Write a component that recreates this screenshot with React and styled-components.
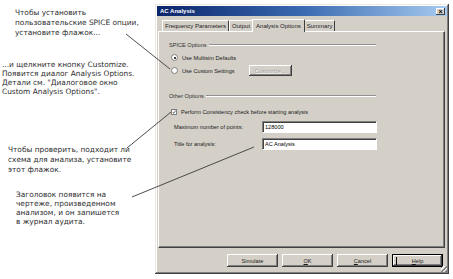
import styled, { createGlobalStyle } from "styled-components";

const GlobalStyle = createGlobalStyle`
  html, body {
    margin: 0;
    padding: 0;
    background: #ffffff;
  }
`;

const Page = styled.div`
  position: relative;
  display: flex;
  width: 453px;
  height: 279px;
  overflow: hidden;
  background: #ffffff;
`;

// left column with the russian callouts
const Notes = styled.div`
  width: 155px;
  flex-shrink: 0;
  display: flex;
  flex-direction: column;
`;

const Note = styled.p`
  margin: ${(p) => p.$top}px 0 0 ${(p) => p.$left}px;
  font-family: "DejaVu Sans", Verdana, sans-serif;
  font-size: 7.4px;
  line-height: ${(p) => p.$lh || 9}px;
  color: #2e2e2e;
  white-space: nowrap;
`;

const Lines = styled.svg`
  position: absolute;
  left: 0;
  top: 0;
  pointer-events: none;
`;

// the dialog window
const Dialog = styled.div`
  margin-top: 4px;
  width: 294px;
  height: 270px;
  box-sizing: border-box;
  padding: 2px;
  background: #d4d0c8;
  box-shadow: inset -1px -1px 0 #404040, inset 1px 1px 0 #ece9e2,
    inset -2px -2px 0 #808080, inset 2px 2px 0 #ffffff;
  display: flex;
  flex-direction: column;
  font-family: "Liberation Sans", Arial, sans-serif;
  font-size: 5.6px;
  color: #1a1a1a;
  position: relative;
`;

const TitleBar = styled.div`
  height: 10px;
  display: flex;
  align-items: center;
  justify-content: space-between;
  padding: 0 2px 0 3px;
  background: linear-gradient(to right, #0a246a, #3a6ab0 50%, #a6caf0);
`;

const Title = styled.span`
  color: #ffffff;
  font-weight: bold;
  font-size: 6px;
`;

const CloseBox = styled.div`
  width: 9px;
  height: 7px;
  background: #d4d0c8;
  box-shadow: inset -1px -1px 0 #404040, inset 1px 1px 0 #ffffff;
  display: flex;
  align-items: center;
  justify-content: center;
  font-size: 7px;
  line-height: 1;
  color: #000;
  font-weight: bold;
`;

const TabStrip = styled.div`
  display: flex;
  align-items: flex-end;
  height: 13px;
  margin: 2px 0 0 5px;
`;

const Tab = styled.div`
  height: ${(p) => (p.$active ? 13 : 11)}px;
  box-sizing: border-box;
  padding: 0 ${(p) => (p.$active ? 3 : 2)}px;
  display: flex;
  align-items: center;
  font-size: 6px;
  background: #d4d0c8;
  border-top: 1px solid #ffffff;
  border-left: 1px solid #ffffff;
  border-right: 1px solid #404040;
  margin-left: ${(p) => (p.$active ? -1 : 0)}px;
  margin-right: ${(p) => (p.$active ? -1 : 0)}px;
  margin-bottom: ${(p) => (p.$active ? -1 : 0)}px;
  position: relative;
  z-index: ${(p) => (p.$active ? 2 : 1)};
  white-space: nowrap;
`;

const Panel = styled.div`
  height: 217px;
  margin: 0 2px 0 1px;
  box-sizing: border-box;
  border-top: 1px solid #ffffff;
  border-left: 1px solid #ffffff;
  border-right: 1px solid #404040;
  border-bottom: 1px solid #404040;
  box-shadow: inset -1px -1px 0 #808080;
  padding: 9px 0 0 10px;
  display: flex;
  flex-direction: column;
`;

const GroupHead = styled.div`
  display: flex;
  align-items: center;
  width: 207px;
  height: 8px;
  margin-top: ${(p) => p.$top || 0}px;
  gap: 2px;
  color: #303030;

  &::after {
    content: "";
    flex: 1;
    height: 0;
    border-top: 1px solid #909090;
    border-bottom: 1px solid #ffffff;
  }
`;

const OptionRow = styled.div`
  display: flex;
  align-items: center;
  height: 13px;
  margin-top: ${(p) => p.$top || 0}px;
  padding-left: ${(p) => p.$indent || 2}px;
  gap: 4px;
  white-space: nowrap;
`;

const Radio = styled.span`
  width: 5px;
  height: 5px;
  border-radius: 50%;
  background: #ffffff;
  border: 1px solid #808080;
  display: inline-flex;
  align-items: center;
  justify-content: center;

  &::after {
    content: "";
    width: 2px;
    height: 2px;
    border-radius: 50%;
    background: ${(p) => (p.$on ? "#000" : "transparent")};
  }
`;

const Check = styled.span`
  width: 6px;
  height: 6px;
  box-sizing: border-box;
  background: #ffffff;
  border: 1px solid #808080;
  display: inline-flex;
  align-items: center;
  justify-content: center;
  font-size: 6px;
  line-height: 1;
`;

const SmallButton = styled.div`
  margin-left: ${(p) => p.$left || 0}px;
  width: 43px;
  height: 11px;
  display: flex;
  align-items: center;
  justify-content: center;
  box-shadow: inset -1px -1px 0 #404040, inset 1px 1px 0 #ffffff,
    inset -2px -2px 0 #808080;
  color: #a0a0a0;
  text-shadow: 1px 1px 0 #ffffff;
`;

const FieldRow = styled.div`
  display: flex;
  align-items: center;
  height: ${(p) => p.$h || 13}px;
  margin-top: ${(p) => p.$top || 0}px;
  padding-left: 5px;
`;

const FieldLabel = styled.span`
  width: 88px;
`;

const Input = styled.div`
  width: 115px;
  height: 12px;
  box-sizing: border-box;
  background: #ffffff;
  border-top: 1px solid #808080;
  border-left: 1px solid #808080;
  border-right: 1px solid #ffffff;
  border-bottom: 1px solid #ffffff;
  box-shadow: inset 1px 1px 0 #404040;
  display: flex;
  align-items: center;
  padding-left: 2px;
  color: #000;
`;

const ButtonBar = styled.div`
  display: flex;
  justify-content: flex-end;
  gap: 4px;
  margin: 6px 4px 0 0;
`;

const Button = styled.div`
  width: 51px;
  height: 13px;
  display: flex;
  align-items: center;
  justify-content: center;
  box-sizing: border-box;
  border: ${(p) => (p.$default ? "1px solid #000" : "none")};
  box-shadow: inset -1px -1px 0 #404040, inset 1px 1px 0 #ffffff,
    inset -2px -2px 0 #808080;
  position: relative;

  &::before {
    content: "";
    display: ${(p) => (p.$default ? "block" : "none")};
    position: absolute;
    left: 3px;
    top: 2px;
    width: 1px;
    height: 8px;
    background: #000;
  }
`;

const Grip = styled.div`
  position: absolute;
  right: 2px;
  bottom: 2px;
  width: 6px;
  height: 6px;
  background: repeating-linear-gradient(
    135deg,
    transparent 0 1px,
    #808080 1px 2px,
    #ffffff 2px 3px
  );
`;

const U = styled.span`
  text-decoration: underline;
`;

export default function App() {
  return (
    <Page>
      <GlobalStyle />
      <Notes>
        <Note $top={8} $left={15} $lh={10}>
          Чтобы установить
          <br />
          пользовательские SPICE опции,
          <br />
          установите флажок...
        </Note>
        <Note $top={22} $left={2}>
          ...и щелкните кнопку Customize.
          <br />
          Появится диалог Analysis Options.
          <br />
          Детали см. "Диалоговое окно
          <br />
          Custom Analysis Options".
        </Note>
        <Note $top={49} $left={8} $lh={10}>
          Чтобы проверить, подходит ли
          <br />
          схема для анализа, установите
          <br />
          этот флажок.
        </Note>
        <Note $top={15} $left={16}>
          Заголовок появится на
          <br />
          чертеже, произведенном
          <br />
          анализом, и он запишется
          <br />в журнал аудита.
        </Note>
      </Notes>

      <Dialog>
        <TitleBar>
          <Title>AC Analysis</Title>
          <CloseBox>×</CloseBox>
        </TitleBar>
        <TabStrip>
          <Tab>Frequency Parameters</Tab>
          <Tab>Output</Tab>
          <Tab $active>Analysis Options</Tab>
          <Tab>Summary</Tab>
        </TabStrip>
        <Panel>
          <GroupHead>SPICE Options</GroupHead>
          <OptionRow $top={2}>
            <Radio $on />
            Use Multisim Defaults
          </OptionRow>
          <OptionRow>
            <Radio />
            Use Custom Settings
            <SmallButton $left={10}>Customize...</SmallButton>
          </OptionRow>
          <GroupHead $top={15}>Other Options</GroupHead>
          <OptionRow $top={5} $indent={2}>
            <Check>✓</Check>
            Perform Consistency check before starting analysis
          </OptionRow>
          <FieldRow $top={2} $h={13}>
            <FieldLabel>Maximum number of points:</FieldLabel>
            <Input>128000</Input>
          </FieldRow>
          <FieldRow $top={4} $h={13}>
            <FieldLabel>Title for analysis:</FieldLabel>
            <Input>AC Analysis</Input>
          </FieldRow>
        </Panel>
        <ButtonBar>
          <Button>Simulate</Button>
          <Button>
            <U>O</U>K
          </Button>
          <Button>
            <U>C</U>ancel
          </Button>
          <Button $default>
            <U>H</U>elp
          </Button>
        </ButtonBar>
        <Grip />
      </Dialog>

      <Lines width="453" height="279" viewBox="0 0 453 279">
        <g stroke="#3a3a3a" strokeWidth="0.9" fill="none">
          <line x1="126" y1="34" x2="170" y2="69" />
          <line x1="127" y1="148" x2="171" y2="112" />
          <line x1="132" y1="197" x2="254" y2="147" />
        </g>
      </Lines>
    </Page>
  );
}
